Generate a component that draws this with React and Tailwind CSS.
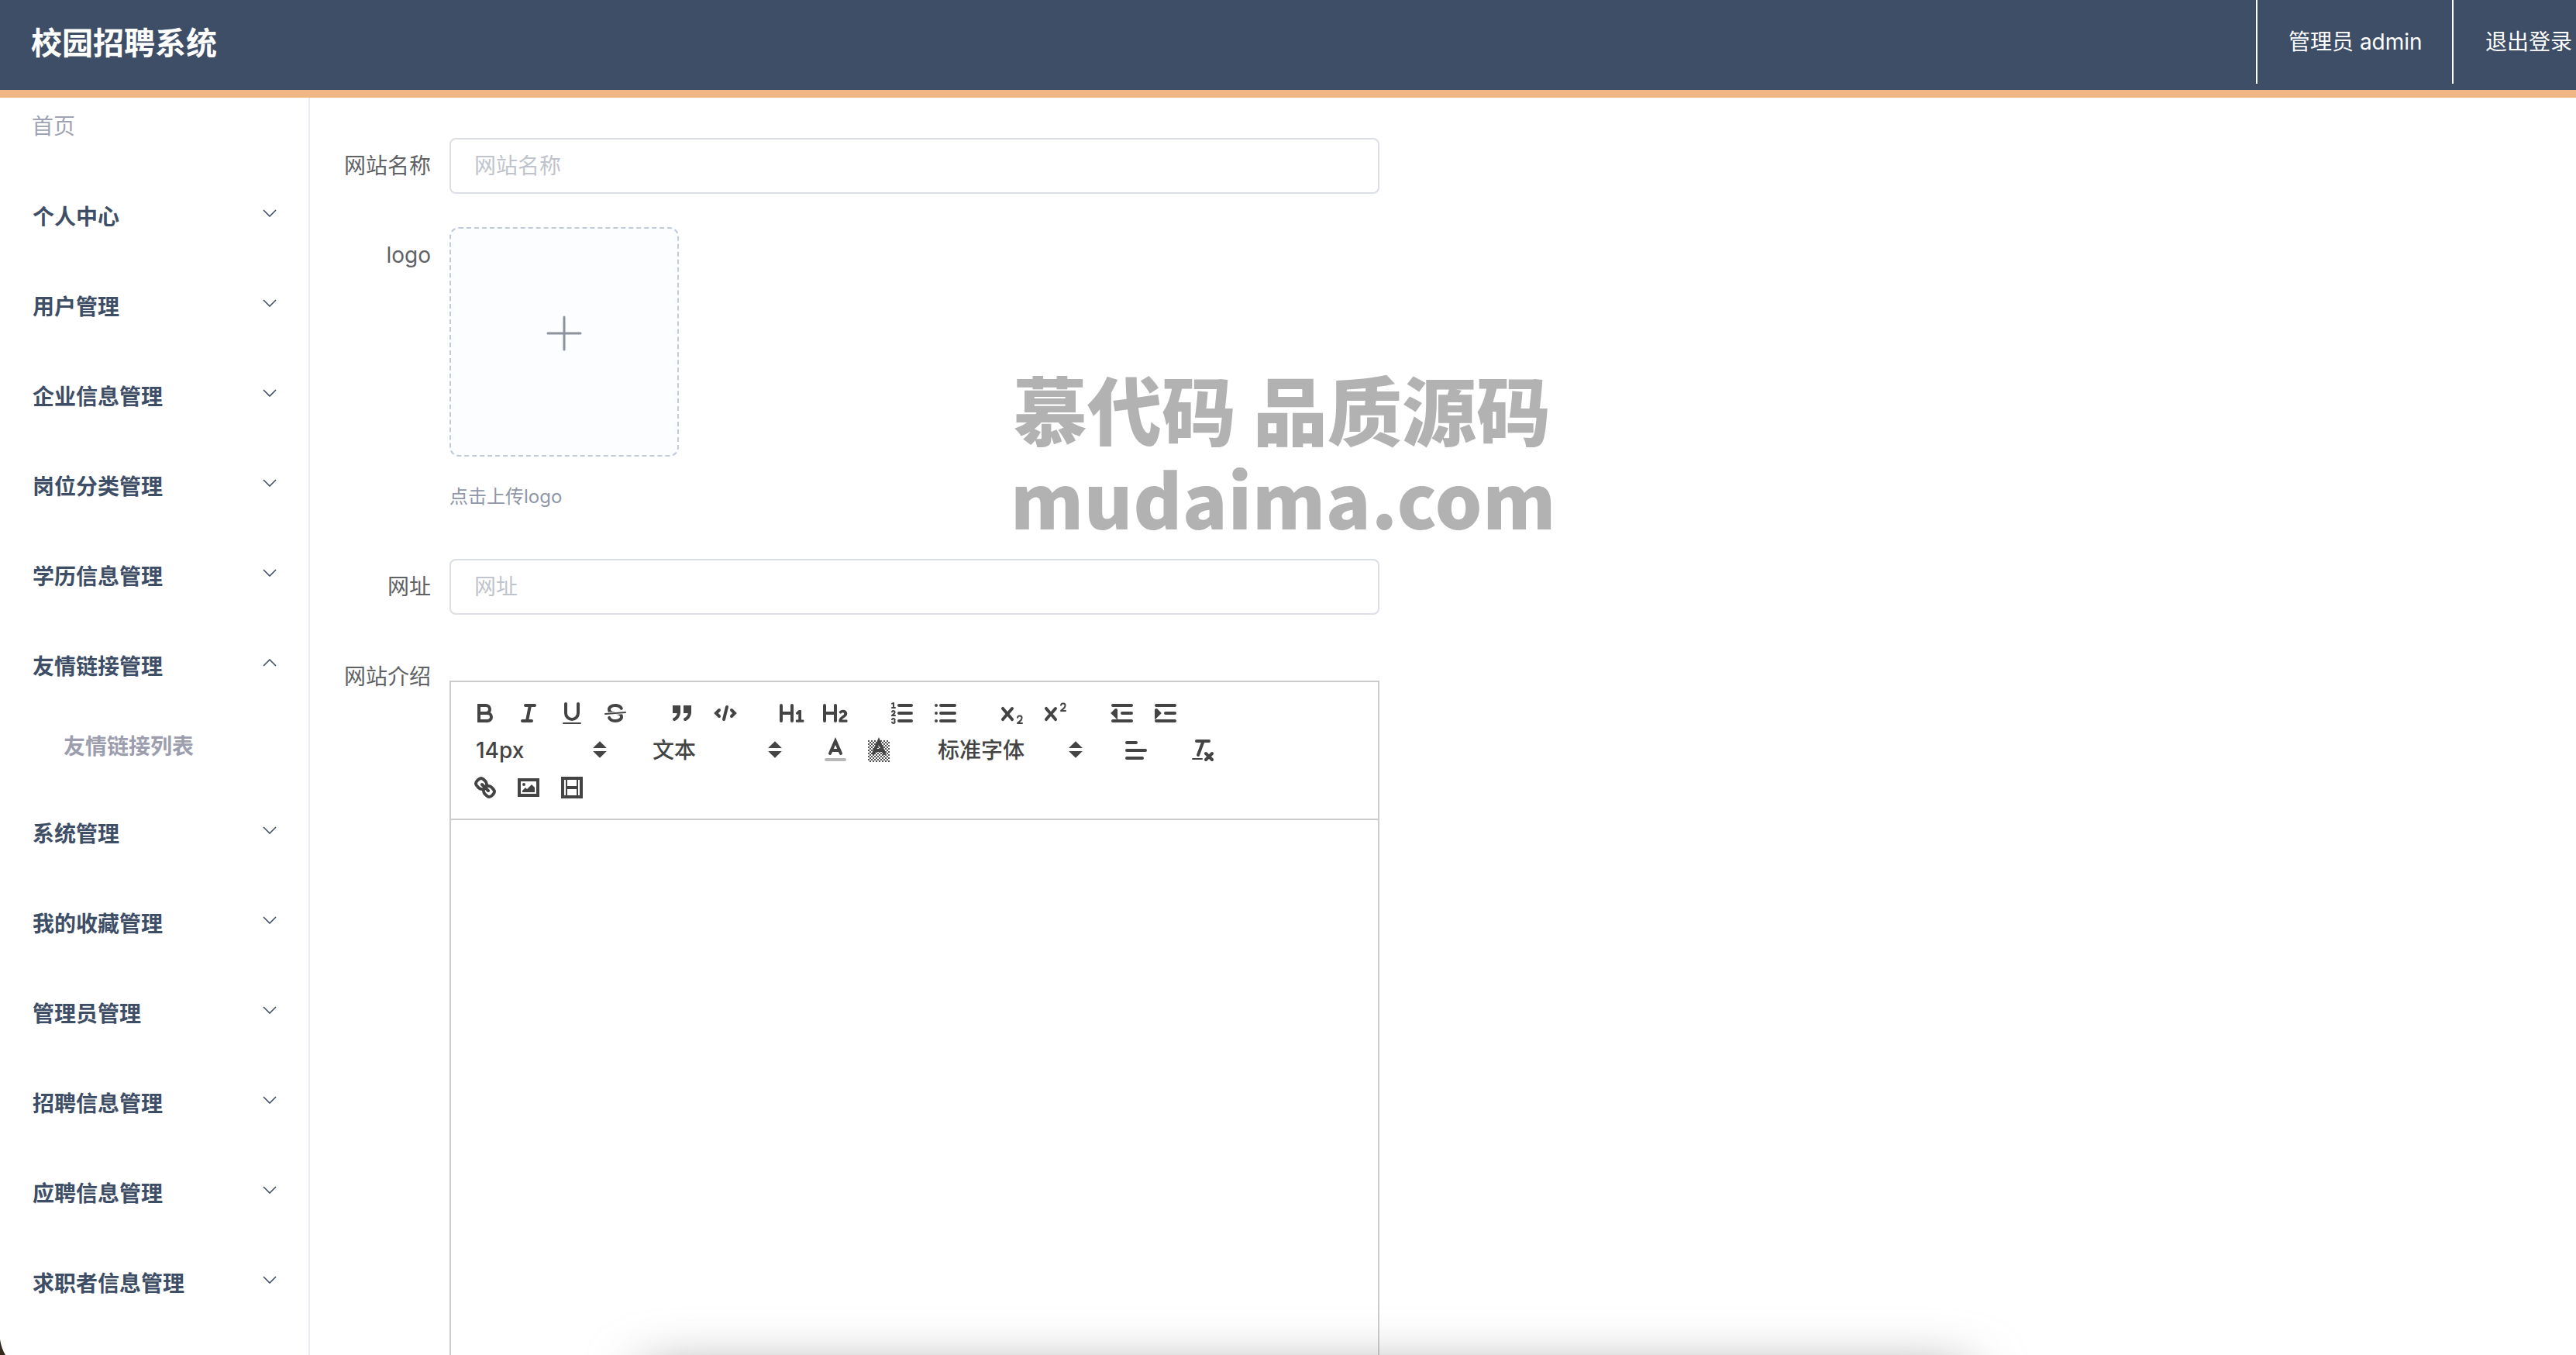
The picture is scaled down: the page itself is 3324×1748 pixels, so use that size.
import React from "react";

const S = "#444444";
const Ic = ({ children }) => (
  <svg viewBox="0 0 18 18" className="w-[36px] h-[36px] block" fill="none" stroke={S} strokeWidth="2" strokeLinecap="round" strokeLinejoin="miter">
    {children}
  </svg>
);
const F = (p) => <path fill={S} stroke="none" {...p} />;
const Btn = ({ children }) => (
  <div className="w-[56px] h-[48px] flex items-center justify-center">
    <Ic>{children}</Ic>
  </div>
);
const xPath = "M9.65,5.241a1,1,0,0,0-1.409.108L6,7.964,3.759,5.349A1,1,0,0,0,2.192,6.59178Q2.21541,6.6213,2.241,6.649L4.684,9.5,2.241,12.35A1,1,0,0,0,3.71,13.70722q0.02557-.02768.049-0.05722L6,11.036,8.241,13.65a1,1,0,1,0,1.567-1.24277Q9.78459,12.3777,9.759,12.35L7.316,9.5,9.759,6.651A1,1,0,0,0,9.65,5.241Z";

const Arrows = () => (
  <svg viewBox="0 0 18 18" className="absolute right-[2px] top-[5px] w-[36px] h-[36px]" fill="none" stroke={S} strokeWidth="2" strokeLinejoin="miter">
    <polygon points="7 11 9 13 11 11 7 11" fill={S} />
    <polygon points="7 7 9 5 11 7 7 7" fill={S} />
  </svg>
);
const Picker = ({ w, pl, children }) => (
  <div className={`relative h-[48px] ${w} ${pl} flex items-center text-[28px] font-medium text-[#444444]`}>
    <span>{children}</span>
    <Arrows />
  </div>
);
const Group = ({ children }) => <div className="flex mr-[30px]">{children}</div>;

const checker = [];
for (let y = 0; y < 14; y++) for (let x = 0; x < 14; x++) if ((x + y) % 2 === 0) checker.push([x + 2, y + 2.5]);

const Toolbar = () => (
  <div className="border-2 border-[#cccccc] p-[16px] flex flex-wrap">
    <Group>
      <Btn><path d="M5,4H9.5A2.5,2.5,0,0,1,12,6.5v0A2.5,2.5,0,0,1,9.5,9H5A0,0,0,0,1,5,9V4A0,0,0,0,1,5,4Z" /><path d="M5,9h5.5A2.5,2.5,0,0,1,13,11.5v0A2.5,2.5,0,0,1,10.5,14H5a0,0,0,0,1,0,0V9A0,0,0,0,1,5,9Z" /></Btn>
      <Btn><line x1="7" x2="13" y1="4" y2="4" /><line x1="5" x2="11" y1="14" y2="14" /><line x1="8" x2="10" y1="14" y2="4" /></Btn>
      <Btn><path d="M5,3V9a4.012,4.012,0,0,0,4,4H9a4.012,4.012,0,0,0,4-4V3" /><rect x="3" y="15" width="12" height="1" rx="0.5" ry="0.5" fill={S} stroke="none" /></Btn>
      <Btn><line x1="15.5" x2="2.5" y1="8.5" y2="9.5" strokeWidth="1" /><F d="M9.007,8C6.542,7.791,6,7.519,6,6.5,6,5.792,7.283,5,9,5c1.571,0,2.765.679,2.969,1.309a1,1,0,0,0,1.9-.617C13.356,4.106,11.354,3,9,3,6.2,3,4,4.538,4,6.5a3.2,3.2,0,0,0,.5,1.843Z" /><F d="M8.984,10C11.457,10.208,12,10.479,12,11.5c0,.708-1.283,1.5-3,1.5-1.571,0-2.765-.679-2.969-1.309a1,1,0,1,0-1.9.617C4.644,13.894,6.646,15,9,15c2.8,0,5-1.538,5-3.5a3.2,3.2,0,0,0-.5-1.843Z" /></Btn>
    </Group>
    <Group>
      <Btn><rect x="4" y="5" width="3" height="3" fill={S} /><rect x="11" y="5" width="3" height="3" fill={S} /><path d="M7,8c0,4.031-3,5-3,5" /><path d="M14,8c0,4.031-3,5-3,5" /></Btn>
      <Btn><polyline points="5 7 3 9 5 11" /><polyline points="13 7 15 9 13 11" /><line x1="10" x2="8" y1="5" y2="13" /></Btn>
    </Group>
    <Group>
      <Btn><F d="M10,4V14a1,1,0,0,1-2,0V10H3v4a1,1,0,0,1-2,0V4A1,1,0,0,1,3,4V8H8V4a1,1,0,0,1,2,0Zm6.06787,9.209H14.98975V7.59863a.54085.54085,0,0,0-.605-.60547h-.62744a1.01119,1.01119,0,0,0-.748.29688L11.645,8.56641a.5435.5435,0,0,0-.022.8584l.28613.30762a.53861.53861,0,0,0,.84717.0332l.09912-.08789a1.2137,1.2137,0,0,0,.2417-.35254h.02246s-.01123.30859-.01123.60547V13.209H12.041a.54085.54085,0,0,0-.605.60547v.43945a.54085.54085,0,0,0,.605.60547h4.02686a.54085.54085,0,0,0,.605-.60547v-.43945A.54085.54085,0,0,0,16.06787,13.209Z" /></Btn>
      <Btn><F d="M16.73975,13.81445v.43945a.54085.54085,0,0,1-.605.60547H11.855a.58392.58392,0,0,1-.64893-.60547V14.0127c0-2.90527,3.39941-3.42187,3.39941-4.55469a.77675.77675,0,0,0-.84717-.78125,1.17684,1.17684,0,0,0-.83594.38477c-.2749.26367-.561.374-.85791.13184l-.4292-.34082c-.30811-.24219-.38525-.51758-.1543-.81445a2.97155,2.97155,0,0,1,2.45361-1.17676,2.45393,2.45393,0,0,1,2.68408,2.40918c0,2.45312-3.1792,2.92676-3.27832,3.93848h2.79443A.54085.54085,0,0,1,16.73975,13.81445ZM9,3A.99974.99974,0,0,0,8,4V8H3V4A1,1,0,0,0,1,4V14a1,1,0,0,0,2,0V10H8v4a1,1,0,0,0,2,0V4A.99974.99974,0,0,0,9,3Z" /></Btn>
    </Group>
    <Group>
      <Btn><line x1="7" x2="15" y1="4" y2="4" /><line x1="7" x2="15" y1="9" y2="9" /><line x1="7" x2="15" y1="14" y2="14" /><line x1="2.5" x2="4.5" y1="5.5" y2="5.5" strokeWidth="1" /><F d="M3.5,6A0.5,0.5,0,0,1,3,5.5V3.085l-0.276.138A0.5,0.5,0,0,1,2.053,3c-0.124-.247-0.023-0.324.224-0.447l1-.5A0.5,0.5,0,0,1,4,2.5v3A0.5,0.5,0,0,1,3.5,6Z" /><path strokeWidth="1" d="M4.5,10.5h-2c0-.234,1.85-1.076,1.85-2.234A0.959,0.959,0,0,0,2.5,8.156" /><path strokeWidth="1" d="M2.5,14.846a0.959,0.959,0,0,0,1.85-.109A0.7,0.7,0,0,0,3.75,14a0.688,0.688,0,0,0,.6-0.736,0.959,0.959,0,0,0-1.85-.109" /></Btn>
      <Btn><line x1="6" x2="15" y1="4" y2="4" /><line x1="6" x2="15" y1="9" y2="9" /><line x1="6" x2="15" y1="14" y2="14" /><line x1="3" x2="3" y1="4" y2="4" /><line x1="3" x2="3" y1="9" y2="9" /><line x1="3" x2="3" y1="14" y2="14" /></Btn>
    </Group>
    <Group>
      <Btn><F d="M15.5,15H13.861a3.858,3.858,0,0,0,1.914-2.975,1.8,1.8,0,0,0-1.6-1.751A1.921,1.921,0,0,0,12.021,11.7a0.50013,0.50013,0,1,0,.957.291h0a0.914,0.914,0,0,1,1.053-.725,0.81,0.81,0,0,1,.744.762c0,1.076-1.16971,1.86982-1.93971,2.43082A1.45639,1.45639,0,0,0,12,15.5a0.5,0.5,0,0,0,.5.5h3A0.5,0.5,0,0,0,15.5,15Z" /><F d={xPath} /></Btn>
      <Btn><F d="M15.5,7H13.861a4.015,4.015,0,0,0,1.914-2.975,1.8,1.8,0,0,0-1.6-1.751A1.922,1.922,0,0,0,12.021,3.7a0.5,0.5,0,1,0,.957.291,0.917,0.917,0,0,1,1.053-.725,0.81,0.81,0,0,1,.744.762c0,1.077-1.164,1.925-1.934,2.486A1.423,1.423,0,0,0,12,7.5a0.5,0.5,0,0,0,.5.5h3A0.5,0.5,0,0,0,15.5,7Z" /><F d={xPath} /></Btn>
    </Group>
    <Group>
      <Btn><line x1="3" x2="15" y1="14" y2="14" /><line x1="3" x2="15" y1="4" y2="4" /><line x1="9" x2="15" y1="9" y2="9" /><polyline points="5 7 5 11 3 9 5 7" fill={S} /></Btn>
      <Btn><line x1="3" x2="15" y1="14" y2="14" /><line x1="3" x2="15" y1="4" y2="4" /><line x1="9" x2="15" y1="9" y2="9" /><polyline points="3 7 3 11 5 9 3 7" fill={S} /></Btn>
    </Group>
    <Group><Picker w="w-[196px]" pl="pl-[16px]">14px</Picker></Group>
    <Group><Picker w="w-[196px]" pl="pl-[18px]">文本</Picker></Group>
    <Group>
      <Btn><line x1="3" x2="15" y1="15" y2="15" stroke="#b8b8b8" /><polyline points="5.5 11 9 3 12.5 11" /><line x1="11.63" x2="6.38" y1="9" y2="9" /></Btn>
      <Btn>
        {checker.map(([x, y]) => <rect key={x + "-" + y} x={x} y={y} width="1" height="1" fill={S} stroke="none" opacity="0.9" />)}
        <polyline points="5.5 11 9 3 12.5 11" /><line x1="11.63" x2="6.38" y1="9" y2="9" />
      </Btn>
    </Group>
    <Group><Picker w="w-[216px]" pl="pl-[18px]">标准字体</Picker></Group>
    <Group>
      <Btn><line x1="3" x2="15" y1="9" y2="9" /><line x1="3" x2="13" y1="14" y2="14" /><line x1="3" x2="9" y1="4" y2="4" /></Btn>
    </Group>
    <Group>
      <Btn><line x1="5" x2="13" y1="3" y2="3" /><line x1="6" x2="9.35" y1="12" y2="3" /><line x1="11" x2="15" y1="11" y2="15" /><line x1="15" x2="11" y1="11" y2="15" /><rect x="2" y="14" width="7" height="1" rx="0.5" ry="0.5" fill={S} stroke="none" /></Btn>
    </Group>
    <Group>
      <Btn><line x1="7" x2="11" y1="7" y2="11" /><path d="M8.9,4.577a3.476,3.476,0,0,1,.36,4.679A3.476,3.476,0,0,1,4.577,8.9C3.185,7.5,2.035,6.4,4.217,4.217S7.5,3.185,8.9,4.577Z" /><path d="M13.423,9.1a3.476,3.476,0,0,0-4.679-.36,3.476,3.476,0,0,0,.36,4.679c1.392,1.392,2.5,2.542,4.679.36S14.815,10.5,13.423,9.1Z" /></Btn>
      <Btn><rect x="3" y="4" width="12" height="10" /><circle cx="6" cy="7" r="1" fill={S} stroke="none" /><polyline points="5 12 5 11 7 9 8 10 11 7 13 9 13 12 5 12" fill={S} stroke="none" /></Btn>
      <Btn><rect x="3" y="3" width="12" height="12" /><g fill={S} stroke="none"><rect x="5" y="3" width="1" height="12" /><rect x="12" y="3" width="1" height="12" /><rect x="5" y="8" width="8" height="2" /><rect x="3" y="5" width="1" height="1" /><rect x="3" y="7" width="1" height="1" /><rect x="3" y="10" width="1" height="1" /><rect x="3" y="12" width="1" height="1" /><rect x="14" y="5" width="1" height="1" /><rect x="14" y="7" width="1" height="1" /><rect x="14" y="10" width="1" height="1" /><rect x="14" y="12" width="1" height="1" /></g></Btn>
    </Group>
  </div>
);

const Chevron = ({ up }) => (
  <svg viewBox="0 0 18 10" className="w-[18px] h-[10px] absolute left-[339px] top-[48px]" fill="none" stroke="#3e4e66" strokeWidth="1.6">
    <polyline points={up ? "1 9 9 1 17 9" : "1 1 9 9 17 1"} />
  </svg>
);
const MenuItem = ({ label, up }) => (
  <div className="relative h-[116px] pl-[42px] flex items-center text-[28px] font-bold text-[#3e4e66]">
    <span>{label}</span>
    <Chevron up={up} />
  </div>
);

const Sidebar = () => (
  <aside className="w-[400px] shrink-0 border-r-2 border-[#e9ebf0] h-full">
    <div className="h-[74px] mb-[22px] pl-[41px] flex items-center text-[28px] text-[#a0a3b3]">首页</div>
    {["个人中心", "用户管理", "企业信息管理", "岗位分类管理", "学历信息管理"].map((t) => <MenuItem key={t} label={t} />)}
    <MenuItem label="友情链接管理" up />
    <div className="h-[104px] pl-[82px] -mt-[7px] mb-[3px] flex items-center text-[28px] font-bold text-[#9c9eae]">友情链接列表</div>
    {["系统管理", "我的收藏管理", "管理员管理", "招聘信息管理", "应聘信息管理", "求职者信息管理"].map((t) => <MenuItem key={t} label={t} />)}
  </aside>
);

const Label = ({ children }) => (
  <div className="w-[156px] shrink-0 h-[72px] pr-[24px] flex items-center justify-end text-[28px] text-[#606266]">{children}</div>
);
const Input = ({ ph }) => (
  <div className="w-[1200px] h-[72px] border-2 border-[#dcdfe6] rounded-[8px] pl-[30px] flex items-center text-[28px] text-[#c0c4cc]">{ph}</div>
);

export default function App() {
  return (
    <div className="relative w-[3324px] h-[1748px] overflow-hidden bg-white" style={{ fontFamily: 'Inter, "Noto Sans CJK SC", sans-serif' }}>
      <header className="h-[126px] bg-[#3e4e66] border-b-[10px] border-[#f0b683] flex text-white">
        <div className="pl-[40px] h-[112px] flex items-center text-[40px] font-bold flex-1">校园招聘系统</div>
        <div className="w-[253px] h-[108px] border-l-2 border-white pl-[40px] flex items-center text-[28px]">管理员 admin</div>
        <div className="w-[160px] h-[108px] border-l-2 border-white pl-[41px] flex items-center text-[28px] whitespace-nowrap">退出登录</div>
      </header>
      <div className="flex h-[1622px]">
        <Sidebar />
        <main className="pl-[24px] pt-[52px]">
          <div className="flex">
            <Label>网站名称</Label>
            <Input ph="网站名称" />
          </div>
          <div className="flex mt-[43px]">
            <Label>logo</Label>
            <div>
              <div className="w-[296px] h-[296px] border-2 border-dashed border-[#c0ccda] rounded-[12px] bg-[#fbfdff] pb-[22px] flex items-center justify-center">
                <svg viewBox="0 0 46 46" className="w-[46px] h-[46px]" stroke="#8c939d" strokeWidth="3" strokeLinecap="round">
                  <line x1="23" y1="2" x2="23" y2="44" />
                  <line x1="2" y1="23" x2="44" y2="23" />
                </svg>
              </div>
              <div className="mt-[32px] h-[40px] flex items-center text-[24px] text-[#8f96a8]">点击上传logo</div>
            </div>
          </div>
          <div className="flex mt-[60px]">
            <Label>网址</Label>
            <Input ph="网址" />
          </div>
          <div className="flex mt-[44px]">
            <Label>网站介绍</Label>
            <div className="w-[1200px] mt-[41px]">
              <Toolbar />
              <div className="h-[900px] border-x-2 border-[#cccccc]" />
            </div>
          </div>
        </main>
      </div>
      <div className="absolute left-[830px] top-[1773px] w-[1710px] h-[120px] bg-[#888888] blur-[36px]" />
      <svg viewBox="0 0 8 20" className="absolute left-0 top-[1728px] w-[8px] h-[20px]">
        <path d="M0 0Q2 12 7 20L0 20Z" fill="#33291c" />
      </svg>
      <div className="absolute left-0 top-[468px] w-[3324px] pr-[16px] text-center text-[96px] leading-[116px] font-black text-[#b2b2b2] whitespace-pre" style={{ fontFamily: '"Noto Sans CJK SC", sans-serif' }}>
        <div>慕代码 品质源码</div>
        <div className="pl-[4px] tracking-[0.5px]">mudaima.com</div>
      </div>
    </div>
  );
}
